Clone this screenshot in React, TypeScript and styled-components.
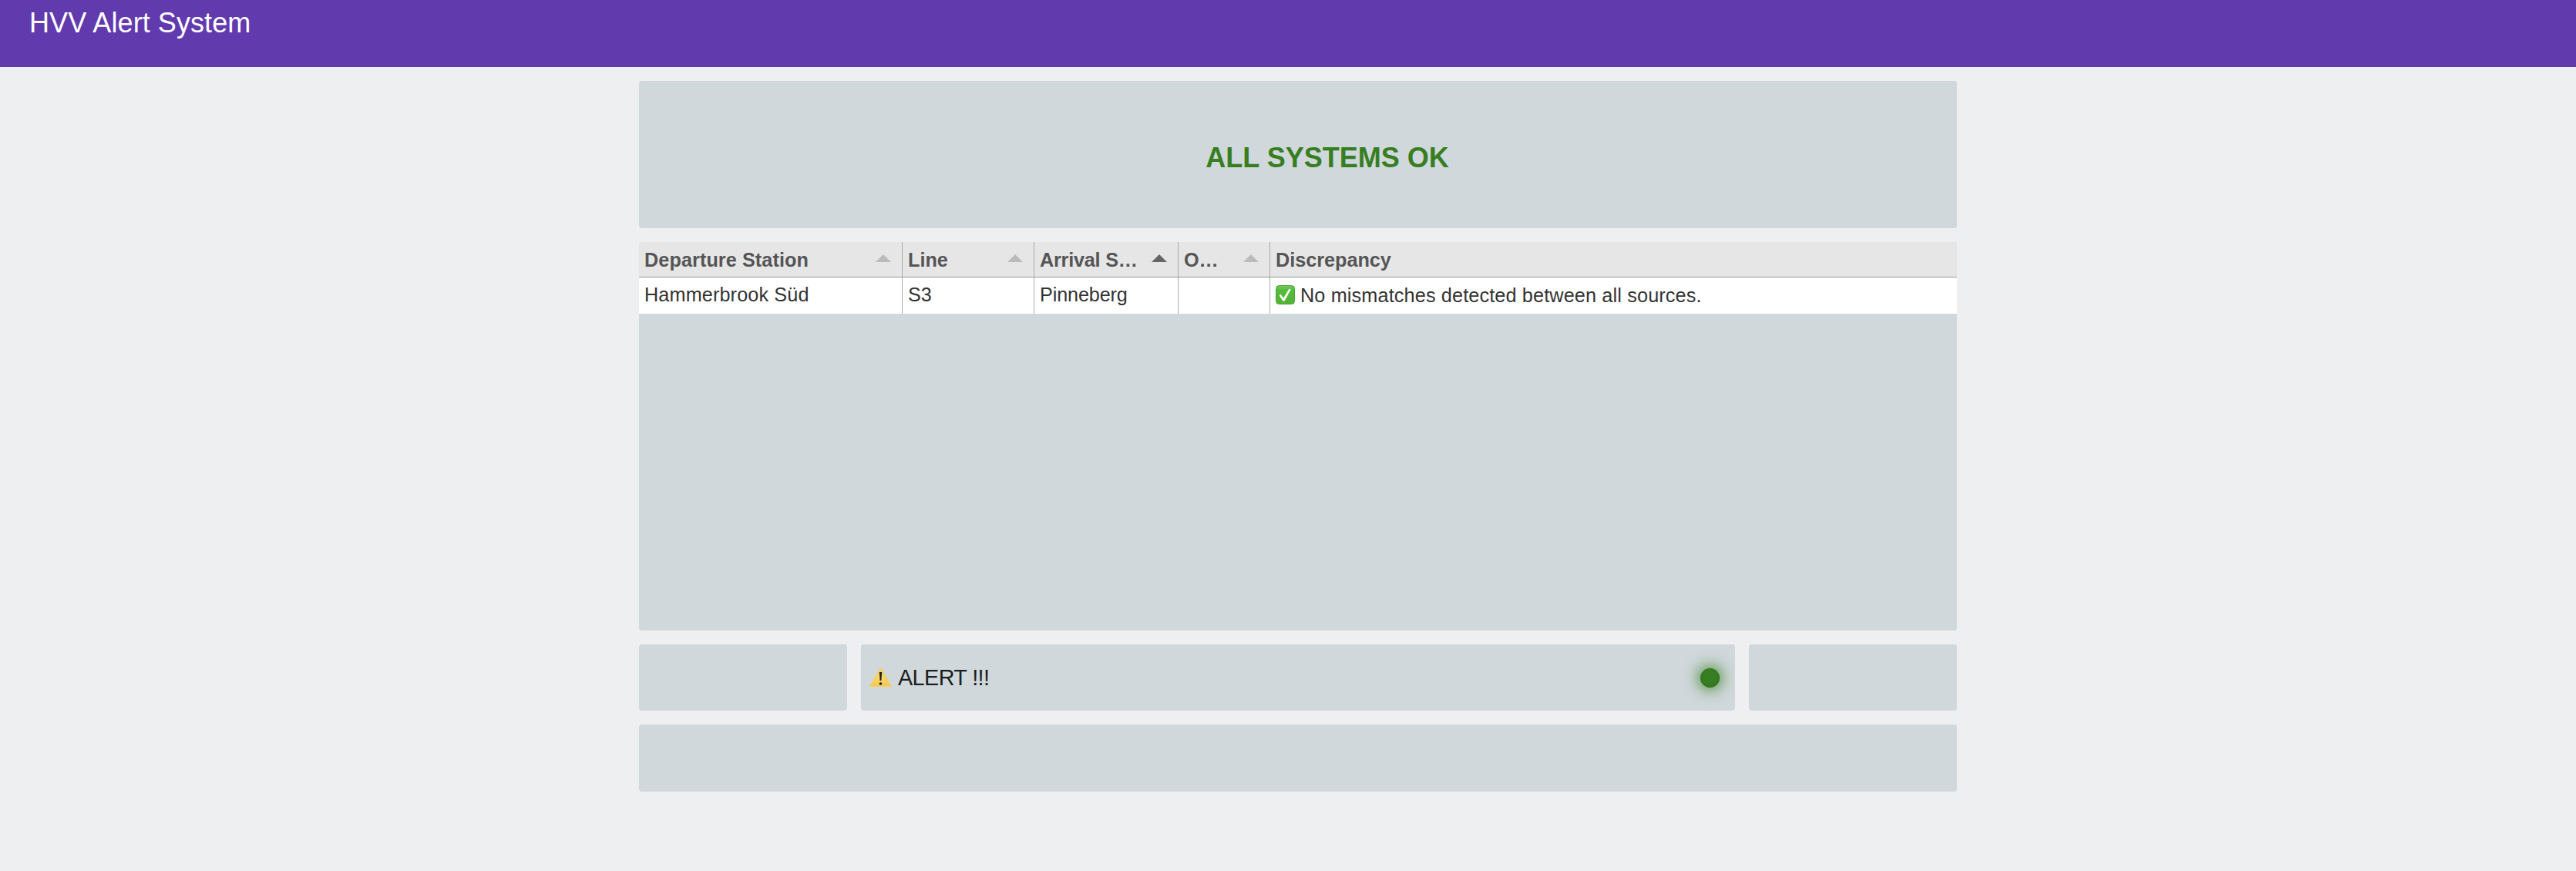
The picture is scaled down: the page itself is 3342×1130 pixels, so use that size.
import React from 'react';
import styled, { createGlobalStyle } from 'styled-components';

const Global = createGlobalStyle`
  * { box-sizing: border-box; }
  body { margin: 0; background: #edeff1; font-family: "Liberation Sans", Arial, Helvetica, sans-serif; }
`;
const Page = styled.div`min-height: 1130px; background: #edeff1;`;
const Header = styled.header`
  height: 87px; padding: 7px 38px; background: #613bae; color: #fff;
  font-size: 36px; line-height: 46px; letter-spacing: 0.08px;
`;
const Grid = styled.main`
  width: 1710px; margin: 18px 0 0 829px; display: grid;
  grid-template-columns: 270px 1fr 270px; grid-template-rows: 191px 504px 86px 87px; gap: 18px;
`;
const Panel = styled.section<{ $wide?: boolean }>`
  background: #d0d8db; border-radius: 4px; overflow: hidden; min-width: 0;
  grid-column: ${(p) => (p.$wide ? '1 / -1' : 'auto')};
`;
const Status = styled(Panel)`display: flex; align-items: center; justify-content: center; padding: 8px 0 0 76px;`;
const StatusText = styled.h2`margin: 0; color: #377e22; font-size: 36px; font-weight: 700; line-height: 44px;`;
const Columns = styled.div<{ $head?: boolean }>`
  display: grid; grid-template-columns: 342px 171px 187px 119px 1fr;
  height: ${(p) => (p.$head ? 46 : 47)}px;
  background: ${(p) => (p.$head ? '#e6e6e6' : '#fff')};
  border-bottom: ${(p) => (p.$head ? '1px solid #999' : '0')};
  color: ${(p) => (p.$head ? '#555' : '#333')};
  font-weight: ${(p) => (p.$head ? 700 : 400)};
`;
const Cell = styled.div<{ $spacing?: number; $body?: boolean }>`
  display: flex; align-items: center; justify-content: space-between; min-width: 0;
  padding: 0 14px ${(p) => (p.$body ? 2 : 0)}px 7px; font-size: 25.2px; white-space: nowrap;
  letter-spacing: ${(p) => p.$spacing ?? 0}px;
  border-right: 1px solid #aaa;
  &:last-child { border-right: 0; justify-content: flex-start; gap: 7px; }
`;
const Label = styled.span`padding-top: 1px;`;
const Arrow = styled.span<{ $active?: boolean }>`
  border: 10px solid transparent; border-top: 0; margin-top: -3px;
  border-bottom-color: ${(p) => (p.$active ? '#666' : '#bbb')};
`;
const Alert = styled(Panel)`
  display: flex; align-items: center; padding: 0 20px 0 11px; gap: 8px;
  font-size: 28.8px; letter-spacing: -0.6px; color: #1c1e1f;
`;
const Led = styled.i`
  width: 25px; height: 25px; border-radius: 50%; margin-left: auto; background: #377e22;
  box-shadow: inset 0 -1px 5px #306f1e, 0 0 20px 2px #377e22;
`;

const Check = () => (
  <svg width="25" height="25" viewBox="0 0 25 25">
    <defs><linearGradient id="ok" x2="0" y2="1"><stop stopColor="#75c75b" /><stop offset=".25" stopColor="#55bd3c" /><stop offset="1" stopColor="#51b236" /></linearGradient></defs>
    <rect x=".5" y=".5" width="24" height="24" rx="4" fill="url(#ok)" stroke="#46a233" />
    <path d="M4.7 13.2 6.6 11.8 10.1 16.8 17.4 4.8 19.7 5.4 11.5 20.4 9.2 20.5Z" fill="#fff" />
  </svg>
);
const Warning = () => (
  <svg width="29" height="26" viewBox="0 0 29 26">
    <defs><linearGradient id="warn" x2="0" y2="1"><stop stopColor="#f5d37a" /><stop offset=".5" stopColor="#f7da6c" /><stop offset="1" stopColor="#f3c650" /></linearGradient></defs>
    <path d="M14.5 1.5 27.5 24H1.5Z" fill="url(#warn)" stroke="#f5cf60" strokeWidth="2" strokeLinejoin="round" />
    <path d="M12.8 6h3.4l-.8 11h-1.8Z" fill="#222" /><circle cx="14.5" cy="21" r="1.8" fill="#222" />
  </svg>
);

export default function App() {
  return (
    <Page>
      <Global />
      <Header>HVV Alert System</Header>
      <Grid>
        <Status $wide><StatusText>ALL SYSTEMS OK</StatusText></Status>
        <Panel $wide>
          <Columns $head>
            <Cell $spacing={0.1}><Label>Departure Station</Label><Arrow /></Cell>
            <Cell><Label>Line</Label><Arrow /></Cell>
            <Cell $spacing={-0.2}><Label>Arrival S…</Label><Arrow $active /></Cell>
            <Cell><Label>O…</Label><Arrow /></Cell>
            <Cell><Label>Discrepancy</Label></Cell>
          </Columns>
          <Columns>
            <Cell $body $spacing={0.15}>Hammerbrook Süd</Cell>
            <Cell $body>S3</Cell>
            <Cell $body $spacing={-0.12}>Pinneberg</Cell>
            <Cell $body />
            <Cell $body $spacing={0.16}><Check /><Label>No mismatches detected between all sources.</Label></Cell>
          </Columns>
        </Panel>
        <Panel />
        <Alert><Warning />ALERT !!!<Led /></Alert>
        <Panel />
        <Panel $wide />
      </Grid>
    </Page>
  );
}
